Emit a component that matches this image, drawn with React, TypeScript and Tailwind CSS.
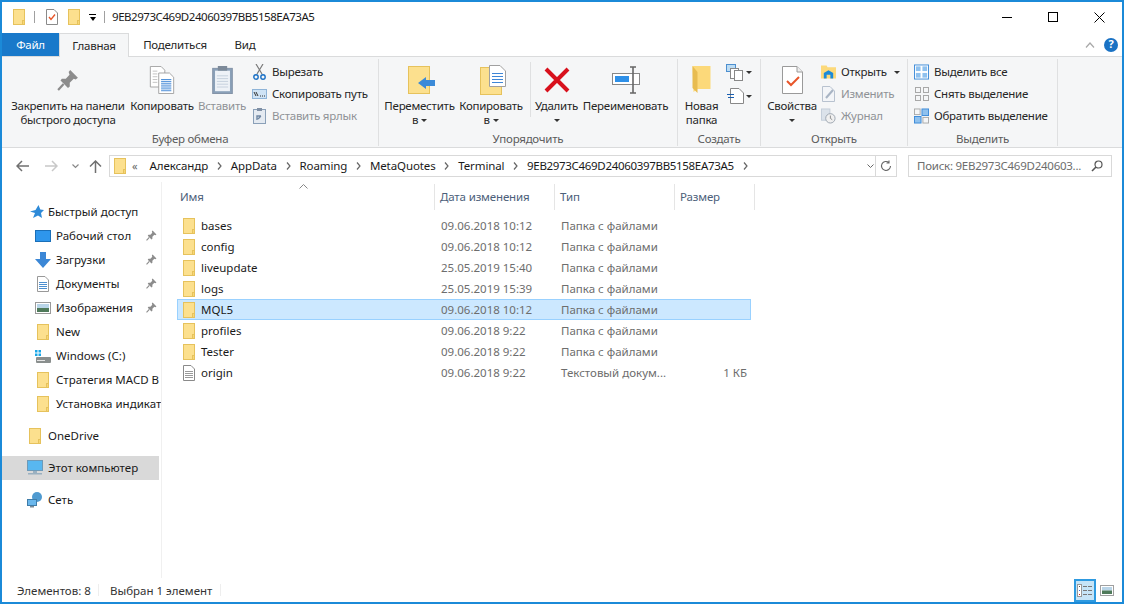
import React from 'react';

const font = "font-['Noto_Sans','Open_Sans',sans-serif]";

function Folder({ w = 12, h = 16, className = '' }: { w?: number; h?: number; className?: string }) {
    return (
        <svg width={w} height={h} viewBox="0 0 12 16" className={className} preserveAspectRatio="none">
            <rect x="0.5" y="0.5" width="11" height="15" fill="#fce08e" stroke="#e6c25c" />
            <rect x="9.5" y="11.5" width="2" height="4" fill="#f8d775" stroke="#e6c25c" />
        </svg>
    );
}

function Pin({ size = 11, color = '#8c8c8c' }: { size?: number; color?: string }) {
    return (
        <svg width={size} height={size} viewBox="0 0 10 10">
            <path d="M6 0.5 L9.5 4 L8.5 4.8 L7.6 4.4 L5.8 6.2 L5.8 8 L5 8.6 L1.6 5.2 L2.2 4.4 L4 4.4 L5.7 2.6 L5.3 1.4 Z" fill={color} />
            <path d="M3 6.8 L0.5 9.5" stroke={color} strokeWidth="1" />
        </svg>
    );
}

function Doc({ w = 21, h = 28 }: { w?: number; h?: number }) {
    return (
        <svg width={w} height={h} viewBox="0 0 21 28">
            <path d="M0.5 0.5 H15 L20.5 6 V27.5 H0.5 Z" fill="#fff" stroke="#9a9a9a" />
            <path d="M15 0.5 V6 H20.5" fill="#eee" stroke="#9a9a9a" />
        </svg>
    );
}

function BigBtn({ label, width, children, arrow, disabled, second }: { label: string; width: string; children: React.ReactNode; arrow?: boolean; disabled?: boolean; second?: string }) {
    return (
        <div className={`flex flex-col items-center ${width} ${disabled ? 'text-[#8f9296]' : 'text-[#262626]'}`}>
            <div className="h-[39px] flex items-center justify-center">{children}</div>
            <div className="leading-[14px] whitespace-nowrap text-center">{label}</div>
            {(second || arrow) && (
                <div className="leading-[14px] h-[14px] whitespace-nowrap text-center flex items-center justify-center gap-[3px]">
                    {second}
                    {arrow && <span className="w-0 h-0 border-x-[3px] border-x-transparent border-t-[3px] border-t-[#333]" />}
                </div>
            )}
        </div>
    );
}

function SmallBtn({ icon, label, disabled, arrow }: { icon: React.ReactNode; label: string; disabled?: boolean; arrow?: boolean }) {
    return (
        <div className={`h-[22px] flex items-center gap-[5px] whitespace-nowrap ${disabled ? 'text-[#8f9296]' : 'text-[#262626]'}`}>
            <span className="w-[15px] h-[16px] flex items-center justify-center shrink-0">{icon}</span>
            {label}
            {arrow && <span className="ml-[2px] w-0 h-0 border-x-[3px] border-x-transparent border-t-[3px] border-t-[#333]" />}
        </div>
    );
}

function Group({ title, width, pl, children }: { title: string; width: string; pl: string; children: React.ReactNode }) {
    return (
        <div className={`${width} shrink-0 h-[87px] mt-[2px] border-r border-[#dfe0e1] flex flex-col`}>
            <div className={`flex-1 min-h-0 flex ${pl} pt-[1px]`}>{children}</div>
            <div className="h-[16px] leading-[18px] text-center text-[#5c5c5c]">{title}</div>
        </div>
    );
}

const sideItems = [
    { label: 'Рабочий стол', pin: true, icon: <span className="block w-[16px] h-[12px] bg-[#2e96ec] border border-[#1a6fb8]" /> },
    {
        label: 'Загрузки', pin: true, icon: (
            <svg width="16" height="16" viewBox="0 0 16 16"><path d="M5 0 H11 V7 H16 L8 16 L0 7 H5 Z" fill="#3b87d6" /></svg>
        ),
    },
    {
        label: 'Документы', pin: true, icon: (
            <svg width="12" height="16" viewBox="0 0 12 16"><path d="M0.5 0.5 H8 L11.5 4 V15.5 H0.5 Z" fill="#fff" stroke="#999" /><path d="M2 6.5 H10 M2 8.5 H10 M2 10.5 H10 M2 12.5 H10" stroke="#4d8fcf" /></svg>
        ),
    },
    {
        label: 'Изображения', pin: true, icon: (
            <svg width="16" height="12" viewBox="0 0 16 12"><rect x="0.5" y="0.5" width="15" height="11" fill="#fff" stroke="#9a9a9a" /><rect x="2" y="2" width="12" height="4" fill="#b9d5e8" /><rect x="2" y="6" width="12" height="4" fill="#4f7a5a" /></svg>
        ),
    },
    { label: 'New', icon: <Folder /> },
    {
        label: 'Windows (C:)', icon: (
            <svg width="16" height="13" viewBox="0 0 16 13"><rect x="0" y="0" width="2.5" height="2.5" fill="#18a7e8" /><rect x="3.5" y="0" width="2.5" height="2.5" fill="#18a7e8" /><rect x="0" y="3.5" width="2.5" height="2.5" fill="#18a7e8" /><rect x="3.5" y="3.5" width="2.5" height="2.5" fill="#18a7e8" /><rect x="1" y="7" width="15" height="6" rx="1" fill="#8a8f8e" /><rect x="2" y="10" width="8" height="1" fill="#e5e5e5" /></svg>
        ),
    },
    { label: 'Стратегия MACD B', icon: <Folder /> },
    { label: 'Установка индикат', icon: <Folder /> },
];

const files = [
    { name: 'bases', date: '09.06.2018 10:12', type: 'Папка с файлами' },
    { name: 'config', date: '09.06.2018 10:12', type: 'Папка с файлами' },
    { name: 'liveupdate', date: '25.05.2019 15:40', type: 'Папка с файлами' },
    { name: 'logs', date: '25.05.2019 15:39', type: 'Папка с файлами' },
    { name: 'MQL5', date: '09.06.2018 10:12', type: 'Папка с файлами', selected: true },
    { name: 'profiles', date: '09.06.2018 9:22', type: 'Папка с файлами' },
    { name: 'Tester', date: '09.06.2018 9:22', type: 'Папка с файлами' },
    { name: 'origin', date: '09.06.2018 9:22', type: 'Текстовый докум...', size: '1 КБ', file: true },
];

const crumbs = ['Александр', 'AppData', 'Roaming', 'MetaQuotes', 'Terminal', '9EB2973C469D24060397BB5158EA73A5'];

function Chevron() {
    return (
        <svg width="5" height="8" viewBox="0 0 5 8" className="shrink-0"><path d="M1 0.5 L4 4 L1 7.5" fill="none" stroke="#666" strokeWidth="1.2" /></svg>
    );
}

export default function App() {
    return (
        <div className={`${font} w-[1124px] h-[604px] bg-white border-2 border-[#1b8ad8] flex flex-col overflow-hidden text-[11.5px] text-[#1a1a1a]`}>
            {/* title bar */}
            <div className="h-[30px] shrink-0 flex items-center pl-[11px] text-[11.5px]">
                <Folder />
                <span className="w-px h-[12px] bg-[#a0a0a0] ml-[9px]" />
                <span className="ml-[11px]"><svg width="12" height="16" viewBox="0 0 12 16"><path d="M0.5 0.5 H8 L11.5 4 V15.5 H0.5 Z" fill="#fff" stroke="#8a8a8a" /><path d="M3 8 L5 10.5 L9 5.5" fill="none" stroke="#e8562a" strokeWidth="1.4" /></svg></span>
                <Folder className="ml-[10px]" />
                <span className="ml-[9px] flex flex-col items-center gap-[2px]">
                    <span className="w-[7px] h-px bg-black" />
                    <span className="w-0 h-0 border-x-[3.5px] border-x-transparent border-t-[4px] border-t-black" />
                </span>
                <span className="w-px h-[12px] bg-[#a0a0a0] ml-[8px]" />
                <span className="ml-[7px] tracking-[-0.45px]">9EB2973C469D24060397BB5158EA73A5</span>
                <div className="ml-auto flex items-center text-black">
                    <div className="w-[46px] flex justify-center"><span className="w-[10px] h-px bg-black" /></div>
                    <div className="w-[46px] flex justify-center"><span className="w-[10px] h-[10px] border border-black" /></div>
                    <div className="w-[46px] flex justify-center"><svg width="11" height="11" viewBox="0 0 11 11"><path d="M0.5 0.5 L10.5 10.5 M10.5 0.5 L0.5 10.5" stroke="#000" /></svg></div>
                </div>
            </div>

            {/* tabs */}
            <div className="h-[24px] shrink-0 flex items-end relative tracking-[-0.25px]">
                <div className="w-[57px] h-[23px] bg-[#1979ca] text-white flex items-center justify-center">Файл</div>
                <div className="w-[70px] h-[24px] bg-[#f5f6f7] border border-b-0 border-[#dadbdc] flex items-center justify-center text-[#262626] relative top-px z-10">Главная</div>
                <div className="w-[92px] h-[23px] flex items-center justify-center text-[#262626]">Поделиться</div>
                <div className="w-[48px] h-[23px] flex items-center justify-center text-[#262626]">Вид</div>
                <div className="ml-auto flex items-center h-[23px] pr-[4px] gap-[9px]">
                    <svg width="10" height="6" viewBox="0 0 10 6"><path d="M1 5.5 L5 1 L9 5.5" fill="none" stroke="#a8a8a8" strokeWidth="1.2" /></svg>
                    <span className="w-[14px] h-[14px] rounded-full bg-[#1a72c4] text-white text-[11px] font-bold flex items-center justify-center">?</span>
                </div>
            </div>

            {/* ribbon */}
            <div className="h-[92px] shrink-0 bg-[#f5f6f7] border-y border-[#dadbdc] flex tracking-[-0.25px]">
                <Group title="Буфер обмена" width="w-[377px]" pl="pl-[7px]">
                    <BigBtn label="Закрепить на панели" second="быстрого доступа" width="w-[118px]">
                        <svg width="22" height="22" viewBox="0 0 10 10"><path d="M6 0.5 L9.5 4 L8.5 4.8 L7.6 4.4 L5.8 6.2 L5.8 8 L5 8.6 L1.6 5.2 L2.2 4.4 L4 4.4 L5.7 2.6 L5.3 1.4 Z" fill="#8c8c8c" /><path d="M3 6.8 L0.5 9.5" stroke="#8c8c8c" /></svg>
                    </BigBtn>
                    <BigBtn label="Копировать" width="w-[68px] ml-[1px]">
                        <svg width="26" height="28" viewBox="0 0 26 30"><path d="M0.5 0.5 H12 L16 4.5 V22.5 H0.5 Z" fill="#fff" stroke="#a0a0a0" /><path d="M9.5 7.5 H21 L25.5 12 V29.5 H9.5 Z" fill="#fff" stroke="#a0a0a0" /><path d="M12 14.5 H23 M12 16.5 H23 M12 18.5 H23 M12 20.5 H23 M12 22.5 H23 M12 24.5 H23 M12 26.5 H23" stroke="#3f86d6" /><path d="M3 5.5 H8 M3 8.5 H8 M3 11.5 H8 M3 14.5 H8 M3 17.5 H8" stroke="#c0c0c0" /></svg>
                    </BigBtn>
                    <BigBtn label="Вставить" width="w-[52px]" disabled>
                        <svg width="21" height="28" viewBox="0 0 22 30"><rect x="0.5" y="2.5" width="21" height="27" fill="#8aa0b8" stroke="#8090a5" /><rect x="3" y="5" width="16" height="22" fill="#eef2f7" /><path d="M5 10.5 H17 M5 13.5 H17 M5 16.5 H17 M5 19.5 H17 M5 22.5 H17" stroke="#c4cfdc" /><rect x="6" y="0" width="10" height="5" fill="#7d8a99" /></svg>
                    </BigBtn>
                    <div className="flex flex-col ml-[4px] mt-[1px]">
                        <SmallBtn label="Вырезать" icon={<svg width="13" height="16" viewBox="0 0 13 16"><path d="M3 0 L9 10 M10 0 L4 10" stroke="#7a7a7a" strokeWidth="1.2" /><circle cx="3" cy="13" r="2.2" fill="none" stroke="#1a6fc4" strokeWidth="1.4" /><circle cx="10" cy="13" r="2.2" fill="none" stroke="#1a6fc4" strokeWidth="1.4" /></svg>} />
                        <SmallBtn label="Скопировать путь" icon={<svg width="15" height="10" viewBox="0 0 15 10"><rect x="0.5" y="0.5" width="14" height="9" fill="#cfe3f5" stroke="#8fb4d8" /><path d="M2 3 L4 7 M4 3 L6 7 M8 7 H9 M10 7 H11 M12 7 H13" stroke="#333" /></svg>} />
                        <SmallBtn label="Вставить ярлык" disabled icon={<svg width="13" height="16" viewBox="0 0 13 16"><rect x="0.5" y="1.5" width="12" height="14" fill="#e4eaf1" stroke="#8aa0b8" /><rect x="4" y="0" width="5" height="3" fill="#8090a5" /><path d="M4 12 V8 H8 M8 8 L5 11" fill="none" stroke="#6f87a3" strokeWidth="1.4" /></svg>} />
                    </div>
                </Group>
                <Group title="Упорядочить" width="w-[299px]" pl="pl-[6px]">
                    <BigBtn label="Переместить" second="в" arrow width="w-[69px]">
                        <svg width="28" height="28" viewBox="0 0 28 28" className="ml-[4px]"><rect x="0.5" y="0.5" width="21" height="27" fill="#fce08e" stroke="#e6c25c" /><path d="M10 17 L18 11 V14 H27 V20 H18 V23 Z" fill="#3b8ad8" /></svg>
                    </BigBtn>
                    <BigBtn label="Копировать" second="в" arrow width="w-[64px] ml-[5px]">
                        <svg width="26" height="30" viewBox="0 0 26 30" className="ml-[4px]"><rect x="0.5" y="2.5" width="21" height="27" fill="#fce08e" stroke="#e6c25c" /><path d="M9.5 0.5 H20 L25.5 6 V21.5 H9.5 Z" fill="#fff" stroke="#a0a0a0" /><path d="M12 8.5 H23 M12 11.5 H23 M12 14.5 H23 M12 17.5 H23" stroke="#3f86d6" /></svg>
                    </BigBtn>
                    <span className="w-px h-[55px] bg-[#dfe0e1] ml-[7px] mt-[2px]" />
                    <BigBtn label="Удалить" arrow width="w-[43px] ml-[4px]">
                        <svg width="26" height="26" viewBox="0 0 26 26"><path d="M2 2 L24 24 M24 2 L2 24" stroke="#d8101c" strokeWidth="4" /></svg>
                    </BigBtn>
                    <BigBtn label="Переименовать" width="w-[85px] ml-[5px]">
                        <svg width="28" height="28" viewBox="0 0 28 28"><rect x="0.5" y="7.5" width="27" height="11" fill="#fff" stroke="#888" /><rect x="3" y="10" width="14" height="6" fill="#2e90e8" /><path d="M18 1 H24 M21 1 V27 M18 27 H24" stroke="#666" strokeWidth="1.6" /></svg>
                    </BigBtn>
                </Group>
                <Group title="Создать" width="w-[83px]" pl="pl-[7px]">
                    <BigBtn label="Новая" second="папка" width="w-[33px]">
                        <svg width="19" height="27" viewBox="0 0 18 27"><path d="M0 0 H18 V23 H5 L1 26 Z" fill="#fcd97a" /><path d="M0 0 L5 6 V27 L0 22 Z" fill="#e8bc50" /></svg>
                    </BigBtn>
                    <div className="flex flex-col ml-[8px] mt-[1px] gap-[4px]">
                        <div className="flex items-center gap-[2px] h-[22px]">
                            <svg width="18" height="17" viewBox="0 0 18 17"><rect x="0.5" y="0.5" width="9" height="7" fill="#bcdcf3" stroke="#4d8fcf" /><rect x="4.5" y="4.5" width="8" height="10" fill="#fff" stroke="#888" /><rect x="8.5" y="6.5" width="8" height="10" fill="#fff" stroke="#888" /></svg>
                            <span className="w-0 h-0 border-x-[3px] border-x-transparent border-t-[3px] border-t-[#333]" />
                        </div>
                        <div className="flex items-center gap-[2px] h-[18px]">
                            <svg width="18" height="16" viewBox="0 0 18 16"><path d="M4.5 0.5 H13 L17.5 5 V15.5 H4.5 Z" fill="#fff" stroke="#888" /><path d="M1 6.5 H8 M2 9.5 H8" stroke="#1a5fb0" /></svg>
                            <span className="w-0 h-0 border-x-[3px] border-x-transparent border-t-[3px] border-t-[#333]" />
                        </div>
                    </div>
                </Group>
                <Group title="Открыть" width="w-[147px]" pl="pl-[6px]">
                    <BigBtn label="Свойства" arrow width="w-[50px]">
                        <div className="relative">
                            <Doc />
                            <svg width="14" height="11" viewBox="0 0 14 11" className="absolute left-[4px] top-[10px]"><path d="M1 5 L5 9 L13 1" fill="none" stroke="#e8562a" strokeWidth="2" /></svg>
                        </div>
                    </BigBtn>
                    <div className="flex flex-col ml-[4px] mt-[1px]">
                        <SmallBtn label="Открыть" arrow icon={<svg width="16" height="14" viewBox="0 0 16 14"><path d="M0 0 H6 L7 2 H16 V14 H0 Z" fill="#fcd97a" /><path d="M3 14 V8 L8 5 L13 8 V14 H10 V10 H6 V14 Z" fill="#1a8ad8" /></svg>} />
                        <SmallBtn label="Изменить" disabled icon={<svg width="14" height="16" viewBox="0 0 14 16"><path d="M0.5 0.5 H8 L12.5 5 V15.5 H0.5 Z" fill="#f3f5f8" stroke="#b8c2cf" /><path d="M4 12 L11 4" stroke="#a8b4c4" strokeWidth="2" /></svg>} />
                        <SmallBtn label="Журнал" disabled icon={<svg width="16" height="16" viewBox="0 0 16 16"><rect x="0.5" y="0.5" width="9" height="12" fill="#dbe2ea" stroke="#c2ccd8" /><circle cx="10" cy="10.5" r="5" fill="#f0f0f0" stroke="#9aa3ae" /><path d="M10 7.5 V10.5 L12 12" fill="none" stroke="#8a8a8a" /></svg>} />
                    </div>
                </Group>
                <Group title="Выделить" width="w-[150px]" pl="pl-[6px]">
                    <div className="flex flex-col mt-[1px]">
                        <SmallBtn label="Выделить все" icon={<svg width="16" height="16" viewBox="0 0 16 16"><rect x="0.5" y="0.5" width="15" height="15" fill="#fff" stroke="#3b8ad8" /><rect x="2" y="2" width="5" height="5" fill="#8fc1ee" /><rect x="9" y="2" width="5" height="5" fill="#8fc1ee" /><rect x="2" y="9" width="5" height="5" fill="#8fc1ee" /><rect x="9" y="9" width="5" height="5" fill="#8fc1ee" /></svg>} />
                        <SmallBtn label="Снять выделение" icon={<svg width="14" height="14" viewBox="0 0 14 14"><rect x="0.5" y="0.5" width="5" height="5" fill="none" stroke="#a8a8a8" /><rect x="8.5" y="0.5" width="5" height="5" fill="none" stroke="#a8a8a8" /><rect x="0.5" y="8.5" width="5" height="5" fill="none" stroke="#a8a8a8" /><rect x="8.5" y="8.5" width="5" height="5" fill="none" stroke="#a8a8a8" /></svg>} />
                        <SmallBtn label="Обратить выделение" icon={<svg width="16" height="16" viewBox="0 0 16 16"><rect x="0.5" y="0.5" width="6" height="6" fill="none" stroke="#a8a8a8" /><rect x="8.5" y="0.5" width="7" height="7" fill="#8fc1ee" stroke="#3b8ad8" /><rect x="0.5" y="8.5" width="7" height="7" fill="#8fc1ee" stroke="#3b8ad8" /><rect x="9.5" y="9.5" width="6" height="6" fill="none" stroke="#a8a8a8" /></svg>} />
                    </div>
                </Group>
            </div>

            {/* address row */}
            <div className="h-[34px] shrink-0 flex items-center pt-[2px] pl-[14px] pr-[10px]">
                <svg width="13" height="12" viewBox="0 0 13 12"><path d="M6 1 L1 6 L6 11 M1 6 H13" fill="none" stroke="#707070" strokeWidth="1.5" /></svg>
                <svg width="13" height="12" viewBox="0 0 13 12" className="ml-[16px]"><path d="M7 1 L12 6 L7 11 M12 6 H0" fill="none" stroke="#c8c8c8" strokeWidth="1.5" /></svg>
                <svg width="7" height="5" viewBox="0 0 7 5" className="ml-[14px]"><path d="M0.5 0.5 L3.5 3.5 L6.5 0.5" fill="none" stroke="#888" strokeWidth="1.2" /></svg>
                <svg width="13" height="13" viewBox="0 0 13 13" className="ml-[10px]"><path d="M1 6.5 L6.5 1 L12 6.5 M6.5 1 V13" fill="none" stroke="#707070" strokeWidth="1.5" /></svg>
                <div className="ml-[7px] w-[788px] h-[22px] border border-[#d9d9d9] flex items-center pl-[4px] text-[#1a1a1a]">
                    <Folder w={12} h={16} />
                    <span className="ml-[6px] text-[#666] text-[11px]">«</span>
                    <div className="flex items-center gap-[8.8px] ml-[12px]">
                        {crumbs.map((c, i) => (
                            <React.Fragment key={c}>
                                <span className={i === 5 ? 'tracking-[-0.32px]' : 'tracking-[-0.1px]'}>{c}</span>
                                <Chevron />
                            </React.Fragment>
                        ))}
                    </div>
                    <div className="ml-auto h-full flex items-center">
                        <span className="w-[10px] flex justify-center"><svg width="7" height="5" viewBox="0 0 7 5"><path d="M0.5 0.5 L3.5 3.5 L6.5 0.5" fill="none" stroke="#666" /></svg></span>
                        <span className="w-[21px] h-full border-l border-[#d9d9d9] flex items-center justify-center"><svg width="12" height="12" viewBox="0 0 12 12"><path d="M10.5 6 A4.5 4.5 0 1 1 9 2.6 M9 0.5 V3 H6.5" fill="none" stroke="#666" strokeWidth="1.1" /></svg></span>
                    </div>
                </div>
                <div className="ml-[11px] flex-1 h-[22px] border border-[#d9d9d9] flex items-center pl-[8px] pr-[8px] text-[#6d6d6d] tracking-[-0.25px] whitespace-nowrap overflow-hidden">
                    Поиск: 9EB2973C469D240603...
                    <svg width="12" height="12" viewBox="0 0 12 12" className="ml-auto shrink-0"><circle cx="7.5" cy="4.5" r="3.5" fill="none" stroke="#555" strokeWidth="1.2" /><path d="M5 7 L1 11" stroke="#555" strokeWidth="1.6" /></svg>
                </div>
            </div>

            {/* main */}
            <div className="flex-1 flex min-h-0">
                <div className="w-[160px] shrink-0 border-r border-[#f0f0f0] pt-[18px] overflow-hidden">
                    <div className="h-[24px] flex items-center pl-[28px] gap-[4px]">
                        <svg width="14" height="14" viewBox="0 0 14 14"><path d="M8.5 0 L10.3 4.6 L14 5 L11 8 L12 13 L8 10.5 L3 13 L5 8 L0 6.5 L5.5 5 Z" fill="#2e8ad8" /></svg>
                        Быстрый доступ
                    </div>
                    {sideItems.map((s) => (
                        <div key={s.label} className="h-[24px] flex items-center relative">
                            <span className="w-[54px] pl-[32px] pr-[4px] flex justify-center shrink-0">{s.icon}</span>
                            <span className="whitespace-nowrap">{s.label}</span>
                            {s.pin && <span className="absolute left-[144px] top-[6px]"><Pin /></span>}
                        </div>
                    ))}
                    <div className="h-[24px] mt-[8px] flex items-center pl-[27px] gap-[7px]">
                        <Folder />
                        OneDrive
                    </div>
                    <div className="h-[24px] mt-[8px] flex items-center pl-[25px] gap-[5px] bg-[#d9d9d9] w-[157px]">
                        <svg width="16" height="16" viewBox="0 0 16 16"><rect x="0.5" y="0.5" width="15" height="10" fill="#58b7f0" stroke="#6e9ab8" /><rect x="6" y="11" width="4" height="2" fill="#9ab0c0" /><rect x="1" y="13" width="14" height="1.5" fill="#9ab0c0" /></svg>
                        Этот компьютер
                    </div>
                    <div className="h-[24px] mt-[8px] flex items-center pl-[25px] gap-[5px]">
                        <svg width="16" height="16" viewBox="0 0 16 16"><circle cx="10" cy="5" r="5" fill="#4f9ad0" /><rect x="0.5" y="7.5" width="9" height="6" fill="#6ab7ec" stroke="#3f7ca8" /><rect x="3" y="14" width="4" height="1.5" fill="#7a8a96" /></svg>
                        Сеть
                    </div>
                </div>

                <div className="flex-1 min-w-0 relative pl-[14px]">
                    <svg width="9" height="5" viewBox="0 0 9 5" className="absolute left-[137px] top-[2px]"><path d="M0.5 4.5 L4.5 0.5 L8.5 4.5" fill="none" stroke="#888" /></svg>
                    <div className="h-[26px] mt-[2px] grid grid-cols-[255px_120px_120px_80px] w-[580px] text-[#4c607a] pl-[4px] tracking-[-0.15px]">
                        <div className="border-r border-[#e5e5e5] flex items-center">Имя</div>
                        <div className="border-r border-[#e5e5e5] pl-[5px] flex items-center">Дата изменения</div>
                        <div className="border-r border-[#e5e5e5] pl-[5px] flex items-center">Тип</div>
                        <div className="border-r border-[#e5e5e5] pl-[5px] flex items-center">Размер</div>
                    </div>
                    <div className="mt-[5px] ml-[1px] w-[574px]">
                        {files.map((f) => (
                            <div key={f.name} className={`h-[21px] grid grid-cols-[258px_120px_116px_70px] items-center pl-[5px] border ${f.selected ? 'bg-[#cce8ff] border-[#99d1ff]' : 'border-transparent'}`}>
                                <div className="flex items-center gap-[6px] text-[#1a1a1a]">
                                    {f.file ? (
                                        <svg width="12" height="16" viewBox="0 0 12 16"><path d="M0.5 0.5 H8 L11.5 4 V15.5 H0.5 Z" fill="#fff" stroke="#8a8a8a" /><path d="M2 6.5 H10 M2 8.5 H10 M2 10.5 H10 M2 12.5 H10" stroke="#9a9a9a" /></svg>
                                    ) : (
                                        <Folder />
                                    )}
                                    {f.name}
                                </div>
                                <div className="text-[#6d6d6d] whitespace-nowrap">{f.date}</div>
                                <div className="text-[#6d6d6d] whitespace-nowrap">{f.type}</div>
                                <div className="text-[#6d6d6d] text-right whitespace-nowrap">{f.size}</div>
                            </div>
                        ))}
                    </div>
                </div>
            </div>

            {/* status bar */}
            <div className="h-[24px] shrink-0 flex items-center pl-[15px] text-[#333] relative">
                <span className="pt-[1px] w-[81px]">Элементов: 8</span>
                <span className="w-px h-[12px] bg-[#eeeeee]" />
                <span className="ml-[11px] pt-[1px] w-[110px]">Выбран 1 элемент</span>
                <span className="w-px h-[12px] bg-[#eeeeee]" />
                <div className="ml-auto flex items-center pr-[4px]">
                    <div className="w-[22px] h-[23px] bg-[#c6e4f7] border-2 border-[#2e9ae0] flex items-center justify-center">
                        <svg width="16" height="13" viewBox="0 0 16 13"><rect x="0.5" y="0.5" width="4" height="12" fill="#fff" stroke="#999" /><rect x="2" y="2" width="1" height="1" fill="#555" /><rect x="2" y="6" width="1" height="1" fill="#3b6fd8" /><rect x="2" y="10" width="1" height="1" fill="#d82020" /><path d="M6 2.5 H10 M11 2.5 H15 M6 6.5 H10 M11 6.5 H15 M6 10.5 H10 M11 10.5 H15" stroke="#777" /></svg>
                    </div>
                    <div className="w-[22px] h-[22px] flex items-center justify-center">
                        <svg width="14" height="11" viewBox="0 0 14 11"><rect x="0.5" y="0.5" width="13" height="10" fill="#fff" stroke="#a0a0a0" /><rect x="2" y="2" width="10" height="3.5" fill="#b9d5e8" /><rect x="2" y="5.5" width="10" height="3.5" fill="#4f7a5a" /></svg>
                    </div>
                </div>
            </div>
        </div>
    );
}
